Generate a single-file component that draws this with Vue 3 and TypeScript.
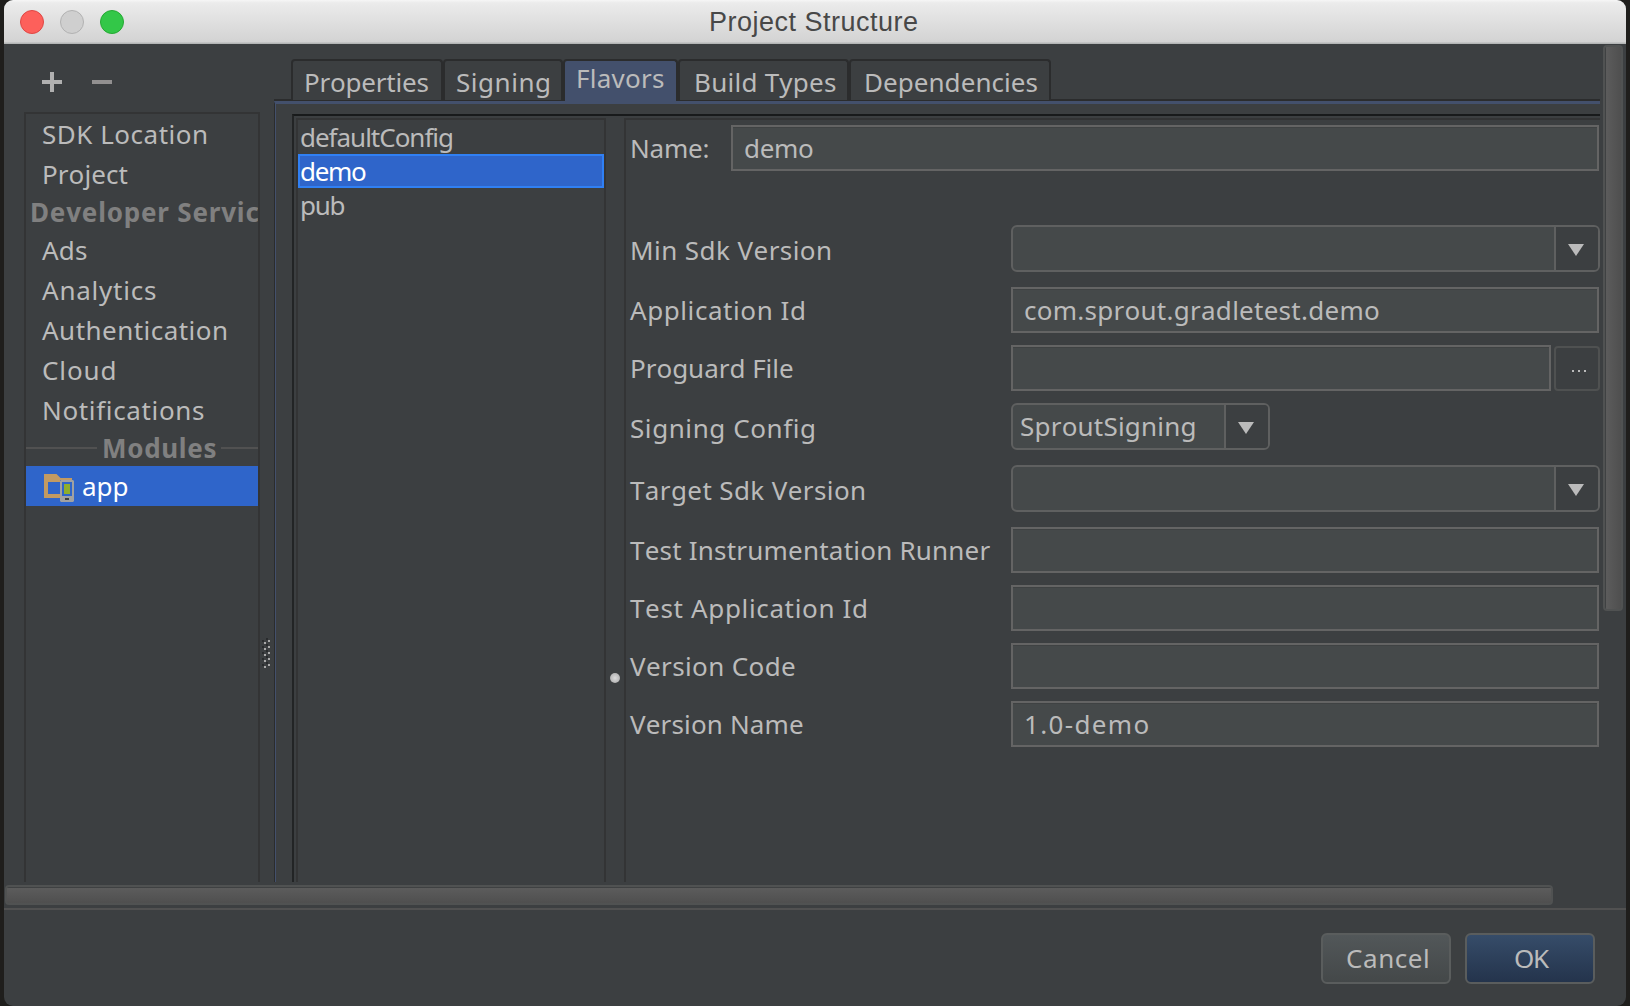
<script setup lang="ts">
import type { Directive } from 'vue'

interface SideItem {
  text: string
  width: number
  kind: 'item' | 'header' | 'module'
  ruled?: boolean
}

interface Tab {
  text: string
  width: number
  box: number
  inset: number
  active?: boolean
}

interface FormRow {
  label: string
  width: number
  kind: 'text' | 'combo' | 'file' | 'select'
  value?: string
  valueWidth?: number
}

// Spreads a label's tracking so that its glyphs cover the given width.
const vFit: Directive<HTMLElement, number> = {
  mounted(el, { value }) {
    const text = el.textContent ?? ''
    const ctx = document.createElement('canvas').getContext('2d')
    if (!ctx || text.length < 2) return
    const cs = getComputedStyle(el)
    ctx.font = `${cs.fontWeight} ${cs.fontSize} ${cs.fontFamily}`
    ctx.fontKerning = 'none'
    const m = ctx.measureText(text)
    const ink = m.actualBoundingBoxRight + m.actualBoundingBoxLeft
    el.style.letterSpacing = `${((value - ink) / (text.length - 1)).toFixed(3)}px`
  },
}

const side: SideItem[] = [
  { text: 'SDK Location', width: 163, kind: 'item' },
  { text: 'Project', width: 83.5, kind: 'item' },
  { text: 'Developer Services', width: 256, kind: 'header' },
  { text: 'Ads', width: 45, kind: 'item' },
  { text: 'Analytics', width: 114, kind: 'item' },
  { text: 'Authentication', width: 184, kind: 'item' },
  { text: 'Cloud', width: 71.5, kind: 'item' },
  { text: 'Notifications', width: 160, kind: 'item' },
  { text: 'Modules', width: 111.5, kind: 'header', ruled: true },
  { text: 'app', width: 44.5, kind: 'module' },
]

const tabs: Tab[] = [
  { text: 'Properties', width: 122.5, box: 152, inset: 11 },
  { text: 'Signing', width: 92, box: 120, inset: 11 },
  { text: 'Flavors', width: 86, box: 115, inset: 11, active: true },
  { text: 'Build Types', width: 140, box: 171, inset: 14 },
  { text: 'Dependencies', width: 171.5, box: 202, inset: 13 },
]

const flavors = [
  { text: 'defaultConfig', width: 151 },
  { text: 'demo', width: 65, selected: true },
  { text: 'pub', width: 42.5 },
]

const rows: FormRow[] = [
  { label: 'Min Sdk Version', width: 198, kind: 'combo' },
  { label: 'Application Id', width: 174, kind: 'text', value: 'com.sprout.gradletest.demo', valueWidth: 354 },
  { label: 'Proguard File', width: 161, kind: 'file' },
  { label: 'Signing Config', width: 183, kind: 'select', value: 'SproutSigning', valueWidth: 173.5 },
  { label: 'Target Sdk Version', width: 234, kind: 'combo' },
  { label: 'Test Instrumentation Runner', width: 360.5, kind: 'text' },
  { label: 'Test Application Id', width: 236, kind: 'text' },
  { label: 'Version Code', width: 165, kind: 'text' },
  { label: 'Version Name', width: 173, kind: 'text', value: '1.0-demo', valueWidth: 122.5 },
]

const gripRows = [0, 1, 2, 3, 4]
</script>

<template>
  <div class="desktop">
    <div class="window">
      <header class="titlebar">
        <span class="light red"></span>
        <span class="light gray"></span>
        <span class="light green"></span>
        <span class="title"><span v-fit="206">Project Structure</span></span>
      </header>

      <div class="main">
        <div class="viewport">
          <aside class="left">
            <div class="tools">
              <svg width="20" height="20"><path d="M8 0h4v8h8v4h-8v8h-4v-8h-8v-4h8z" fill="#b0b0b0" /></svg>
              <svg width="20" height="20"><path d="M0 8h20v4h-20z" fill="#929090" /></svg>
            </div>
            <div class="tree">
              <div v-for="s in side" :key="s.text" class="node" :class="[s.kind, { ruled: s.ruled }]">
                <svg v-if="s.kind === 'module'" class="folder" width="30" height="28">
                  <path d="M0 0H12.5L16.5 4H28V6H16V24H0zM4 8V20H16V8z" fill="#c29a62" fill-rule="evenodd" />
                  <path d="M17 6H29L30 7V27L29 28H17L16 27V7zM18 8V22H28V8z" fill="#a1a1a1" fill-rule="evenodd" />
                  <path d="M20 10h6v10h-6z" fill="#8fae2c" />
                  <path d="M21 24h4v2h-4z" fill="#3c3f41" />
                </svg>
                <span v-fit="s.width">{{ s.text }}</span>
              </div>
            </div>
          </aside>

          <div class="grip">
            <svg width="8" height="30" shape-rendering="crispEdges">
              <g v-for="i in gripRows" :key="i">
                <path :d="`M0 ${i * 6 + 2}h2v2h-2zM4 ${i * 6}h2v2h-2z`" fill="#292b2d" />
                <path :d="`M2 ${i * 6 + 4}h2v2h-2zM6 ${i * 6 + 2}h2v2h-2z`" fill="#a9a9a9" />
              </g>
            </svg>
          </div>

          <section class="right">
            <nav class="tabs">
              <div
                v-for="t in tabs"
                :key="t.text"
                class="tab"
                :class="{ active: t.active }"
                :style="{ width: t.box + 'px', paddingLeft: t.inset + 'px' }"
              >
                <span v-fit="t.width">{{ t.text }}</span>
              </div>
            </nav>
            <div class="pane">
              <div class="inner">
                <div class="list">
                  <div v-for="f in flavors" :key="f.text" class="flavor" :class="{ selected: f.selected }">
                    <span v-fit="f.width">{{ f.text }}</span>
                  </div>
                </div>
                <div class="split"><i></i></div>
                <div class="detail">
                  <div class="name-row">
                    <span class="name-label"><span v-fit="76.5">Name:</span></span>
                    <div class="field"><span v-fit="68">demo</span></div>
                  </div>
                  <div v-for="r in rows" :key="r.label" class="row" :class="r.kind">
                    <div class="label"><span v-fit="r.width">{{ r.label }}</span></div>
                    <div v-if="r.kind === 'text'" class="field">
                      <span v-if="r.value" v-fit="r.valueWidth ?? 0">{{ r.value }}</span>
                    </div>
                    <template v-else-if="r.kind === 'file'">
                      <div class="field"></div>
                      <div class="browse">
                        <svg width="14" height="2"><path d="M0 0h2v2h-2zM6 0h2v2h-2zM12 0h2v2h-2z" fill="#bbb" /></svg>
                      </div>
                    </template>
                    <div v-else class="box">
                      <div class="box-value"><span v-if="r.value" v-fit="r.valueWidth ?? 0">{{ r.value }}</span></div>
                      <div class="arrow">
                        <svg width="16" height="12"><path d="M0 0H16L8 12z" fill="#bbb" /></svg>
                      </div>
                    </div>
                  </div>
                </div>
              </div>
            </div>
          </section>
        </div>
        <div class="vtrack"><div class="vthumb"></div></div>
      </div>
      <div class="htrack"><div class="hthumb"></div></div>

      <footer class="footer">
        <div class="button"><span v-fit="81">Cancel</span></div>
        <div class="button ok"><span v-fit="35">OK</span></div>
      </footer>
    </div>
  </div>
</template>

<style>
body {
  background: #1f1e1c;
  overflow: hidden;
}
</style>

<style scoped>
* {
  box-sizing: border-box;
}
svg {
  display: block;
}
.desktop {
  width: 1630px;
  height: 1006px;
  padding: 0 4px;
  background: #1f1e1c;
  font: 26px 'Noto Sans', 'Open Sans', sans-serif;
  font-kerning: none;
  font-variant-ligatures: none;
  color: #bbb;
  white-space: pre;
}
.window {
  width: 1622px;
  height: 1006px;
  display: flex;
  flex-direction: column;
  border-radius: 9px;
  overflow: hidden;
  background: #3c3f41;
}
.titlebar {
  height: 44px;
  flex: none;
  display: flex;
  align-items: center;
  gap: 16px;
  padding-left: 16px;
  background: linear-gradient(#f6f6f6 0, #ebebeb 3px, #d3d3d3 42px, #b4b6b6 43px);
  position: relative;
}
.light {
  width: 24px;
  height: 24px;
  border-radius: 50%;
  border: 1px solid;
}
.red {
  background: #fd605b;
  border-color: #df4744;
}
.gray {
  background: #cfcfcf;
  border-color: #b2b2b2;
}
.green {
  background: #33c748;
  border-color: #25a933;
}
.title {
  position: absolute;
  left: 705px;
  top: 0;
  font: 27px/45px 'Liberation Sans', Arial, sans-serif;
  color: #484848;
}
.main {
  height: 838px;
  flex: none;
  display: flex;
}
.viewport {
  width: 1596px;
  height: 838px;
  display: flex;
  overflow: hidden;
}
.left {
  width: 256px;
  flex: none;
  padding-left: 20px;
}
.tools {
  height: 68px;
  display: flex;
  gap: 30px;
  padding: 28px 0 0 18px;
}
.tree {
  width: 236px;
  height: 790px;
  border: 2px solid #333435;
  overflow: hidden;
}
.node {
  height: 40px;
  line-height: 40px;
  padding-left: 16px;
  display: flex;
}
.header {
  height: 36px;
  line-height: 36px;
  font-weight: bold;
  color: #808080;
  padding-left: 4px;
}
.ruled {
  padding: 0;
  align-items: center;
}
.ruled::before,
.ruled::after {
  content: '';
  height: 2px;
  background: #515151;
  flex: none;
}
.ruled::before {
  width: 71px;
  margin-right: 5px;
}
.ruled::after {
  width: 60px;
  margin-left: 4px;
}
.module {
  background: #2f65ca;
  color: #fff;
  padding-left: 18px;
}
.folder {
  flex: none;
  margin: 8px 8px 0 0;
}
.grip {
  width: 14px;
  flex: none;
  padding: 594px 0 0 2px;
}
.right {
  width: 1326px;
  flex: none;
  padding-top: 15px;
}
.tabs {
  height: 42px;
  display: flex;
  padding-left: 17px;
  border-bottom: 2px solid #2b2c2d;
  position: relative;
}
.tab {
  height: 41px;
  flex: none;
  border: 2px solid #2b2c2d;
  border-bottom: 0;
  border-radius: 4px 4px 0 0;
  line-height: 42px;
  background: #3c3f41;
}
.tab.active {
  height: 42px;
  line-height: 34px;
  background: #43506c;
}
.pane {
  border-top: 3px solid #43506c;
  border-left: 1px solid #2b2c2d;
  height: 800px;
  padding: 10px 0 0 17px;
  box-shadow: inset 1px 0 #43506c;
}
.inner {
  border-top: 2px solid #181a1b;
  border-left: 2px solid #222425;
  height: 790px;
  display: flex;
  padding: 2px 0 0 2px;
}
.list {
  width: 310px;
  flex: none;
  border: 2px solid #333435;
}
.flavor {
  height: 34px;
  line-height: 34px;
  padding-left: 2px;
}
.flavor.selected {
  background: #2f65ca;
  border: 2px solid #3080f4;
  line-height: 30px;
  padding-left: 0;
  color: #fff;
}
.split {
  width: 18px;
  flex: none;
  padding: 555px 0 0 4px;
}
.split i {
  display: block;
  width: 10px;
  height: 10px;
  border-radius: 50%;
  background: radial-gradient(#dcdcdc, #bbb 60%, #8a8a8a);
}
.detail {
  flex: 1;
  border-top: 2px solid #333435;
  border-left: 2px solid #333435;
  padding: 5px 0 0 4px;
}
.name-row {
  display: flex;
  height: 46px;
  margin-bottom: 54px;
}
.name-label {
  width: 101px;
  flex: none;
  line-height: 46px;
}
.field {
  width: 588px;
  height: 46px;
  flex: none;
  border: 2px solid #646464;
  background: #45494a;
  box-shadow: inset 0 1px #3f4243;
  line-height: 42px;
  padding-left: 11px;
}
.name-row .field {
  width: 868px;
}
.row {
  display: flex;
  height: 46px;
  line-height: 46px;
  margin-bottom: 12px;
}
.combo,
.select {
  height: 50px;
  line-height: 50px;
}
.label {
  width: 381px;
  flex: none;
}
.file .field {
  width: 540px;
}
.browse {
  width: 46px;
  height: 45px;
  margin: 1px 0 0 3px;
  border: 2px solid #4f5151;
  border-radius: 4px;
  padding: 22px 0 0 16px;
}
.box {
  width: 588.5px;
  height: 47px;
  border: 2px solid #5f6060;
  border-radius: 6px;
  background: #45494a;
  display: flex;
  overflow: hidden;
  line-height: 43px;
}
.select .box {
  width: 259px;
}
.box-value {
  flex: 1;
  padding-left: 7px;
}
.arrow {
  width: 44px;
  flex: none;
  border-left: 2px solid #5f6060;
  background: #3c3f41;
  padding: 17px 0 0 12px;
}
.vtrack {
  width: 26px;
  padding: 1px 0 0 3px;
}
.vthumb {
  width: 20px;
  height: 566px;
  border: 2px solid #505252;
  border-radius: 4px;
  background: linear-gradient(90deg, #3f4142 1px, #5c5c5c 1px, #4f4f4f);
}
.htrack {
  height: 28px;
  flex: none;
  padding: 3px 0 0 1px;
  border-bottom: 2px solid #515151;
}
.hthumb {
  width: 1548px;
  height: 20px;
  border: 2px solid #505252;
  border-radius: 4px;
  background: linear-gradient(#3f4142 1px, #5c5c5c 1px, #4f4f4f);
}
.footer {
  flex: 1;
  display: flex;
  justify-content: flex-end;
  gap: 14px;
  padding: 23px 31px 0 0;
}
.button {
  width: 130px;
  height: 51px;
  border: 2px solid #5a5d5d;
  border-radius: 6px;
  background: linear-gradient(#525759, #444849);
  display: flex;
  padding-left: 23px;
  line-height: 47px;
}
.button.ok {
  background: linear-gradient(#364c69, #24344c);
  padding-left: 47px;
}
</style>
